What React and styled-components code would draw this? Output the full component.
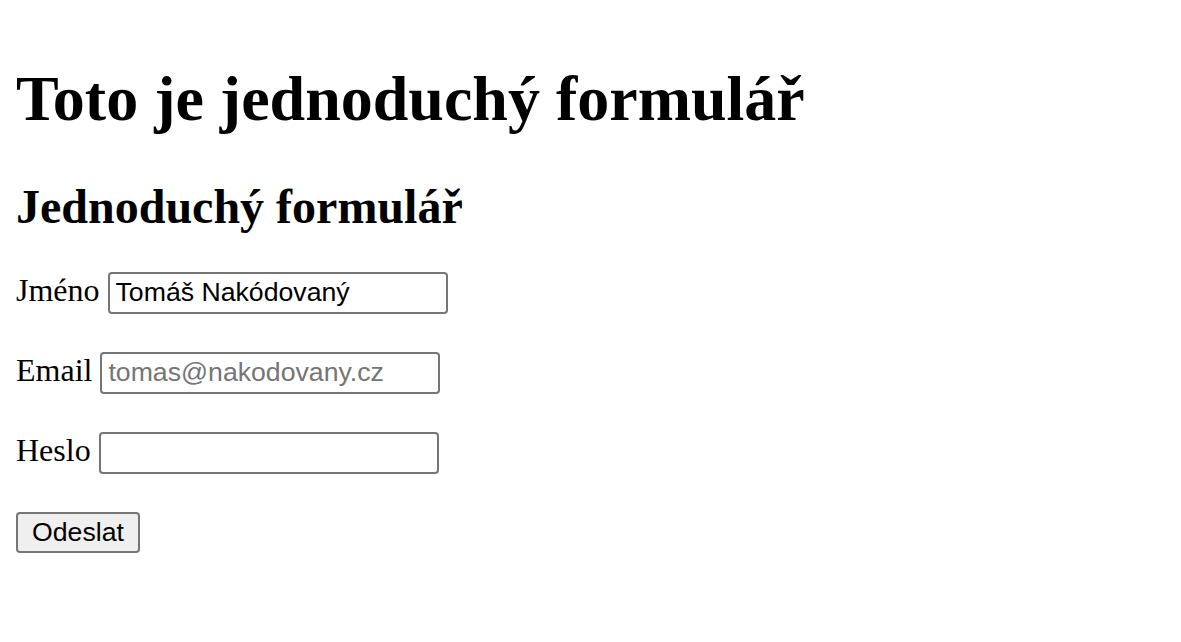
import React from 'react';
import styled, { createGlobalStyle } from 'styled-components';

const GlobalStyle = createGlobalStyle`
	body {
		margin: 16px;
		font-family: 'Liberation Serif', 'Times New Roman', serif;
		font-size: 32px;
		color: #000;
		background: #fff;
	}
`;

const Title = styled.h1`
	font-size: 64px;
	font-weight: bold;
	margin: 46px 0 42.88px;
`;

const Subtitle = styled.h2`
	font-size: 48px;
	font-weight: bold;
	margin: 39.84px 0 36.84px;
`;

const Row = styled.p`
	margin: 38px 0;
`;

const Label = styled.label`
	margin-right: 8px;
`;

const Input = styled.input`
	font-family: 'Liberation Sans', Arial, sans-serif;
	font-size: 26.67px;
	width: 326px;
	box-sizing: content-box;
	height: 34px;
	padding: 2px 4px 2px 6px;
	border: 2px solid #767676;
	border-radius: 4px;
	color: #000;
	background: #fff;
	vertical-align: baseline;

	&::placeholder {
		color: #757575;
	}
`;

const Button = styled.button`
	font-family: 'Liberation Sans', Arial, sans-serif;
	font-size: 26.67px;
	padding: 2px 14px;
	border: 2px solid #767676;
	border-radius: 4px;
	background: #efefef;
	color: #000;
	height: 41px;
`;

export default function App() {
	return (
		<>
			<GlobalStyle />
			<Title>Toto je jednoduchý formulář</Title>
			<Subtitle>Jednoduchý formulář</Subtitle>
			<form onSubmit={(e) => e.preventDefault()}>
				<Row>
					<Label htmlFor='jmeno'>Jméno</Label>
					<Input id='jmeno' type='text' defaultValue='Tomáš Nakódovaný' />
				</Row>
				<Row>
					<Label htmlFor='email'>Email</Label>
					<Input id='email' type='email' placeholder='tomas@nakodovany.cz' />
				</Row>
				<Row>
					<Label htmlFor='heslo'>Heslo</Label>
					<Input id='heslo' type='password' />
				</Row>
				<Row>
					<Button type='submit'>Odeslat</Button>
				</Row>
			</form>
		</>
	);
}
